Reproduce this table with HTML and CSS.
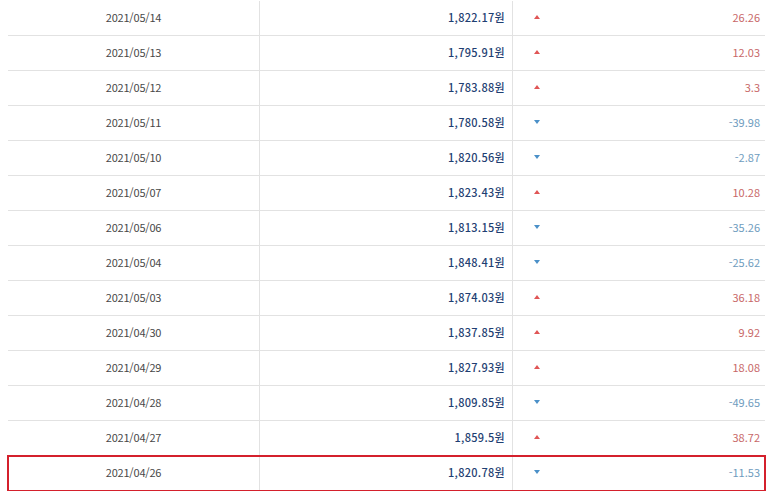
FILE: index.html
```html
<!DOCTYPE html>
<html lang="ko">
<head>
<meta charset="utf-8">
<link rel="stylesheet" href="styles.css">
</head>
<body>
<div class="table">
  <div class="row"><div class="date">2021/05/14</div><div class="price">1,822.17원</div><div class="chg up"><span class="arrow"></span><span class="val">26.26</span></div></div>
  <div class="row"><div class="date">2021/05/13</div><div class="price">1,795.91원</div><div class="chg up"><span class="arrow"></span><span class="val">12.03</span></div></div>
  <div class="row"><div class="date">2021/05/12</div><div class="price">1,783.88원</div><div class="chg up"><span class="arrow"></span><span class="val">3.3</span></div></div>
  <div class="row"><div class="date">2021/05/11</div><div class="price">1,780.58원</div><div class="chg down"><span class="arrow"></span><span class="val">-39.98</span></div></div>
  <div class="row"><div class="date">2021/05/10</div><div class="price">1,820.56원</div><div class="chg down"><span class="arrow"></span><span class="val">-2.87</span></div></div>
  <div class="row"><div class="date">2021/05/07</div><div class="price">1,823.43원</div><div class="chg up"><span class="arrow"></span><span class="val">10.28</span></div></div>
  <div class="row"><div class="date">2021/05/06</div><div class="price">1,813.15원</div><div class="chg down"><span class="arrow"></span><span class="val">-35.26</span></div></div>
  <div class="row"><div class="date">2021/05/04</div><div class="price">1,848.41원</div><div class="chg down"><span class="arrow"></span><span class="val">-25.62</span></div></div>
  <div class="row"><div class="date">2021/05/03</div><div class="price">1,874.03원</div><div class="chg up"><span class="arrow"></span><span class="val">36.18</span></div></div>
  <div class="row"><div class="date">2021/04/30</div><div class="price">1,837.85원</div><div class="chg up"><span class="arrow"></span><span class="val">9.92</span></div></div>
  <div class="row"><div class="date">2021/04/29</div><div class="price">1,827.93원</div><div class="chg up"><span class="arrow"></span><span class="val">18.08</span></div></div>
  <div class="row"><div class="date">2021/04/28</div><div class="price">1,809.85원</div><div class="chg down"><span class="arrow"></span><span class="val">-49.65</span></div></div>
  <div class="row"><div class="date">2021/04/27</div><div class="price">1,859.5원</div><div class="chg up"><span class="arrow"></span><span class="val">38.72</span></div></div>
  <div class="row highlight"><div class="date">2021/04/26</div><div class="price">1,820.78원</div><div class="chg down"><span class="arrow"></span><span class="val">-11.53</span></div></div>
</div>
</body>
</html>
```

FILE: styles.css
```css
html, body {
  margin: 0;
  padding: 0;
  background: #ffffff;
}
body {
  font-family: "Noto Sans CJK KR", "Noto Sans", sans-serif;
  font-size: 11px;
  width: 773px;
  height: 491px;
  overflow: hidden;
}
.table {
  padding: 1px 0 0 8px;
  width: 757px;
}
.row {
  display: grid;
  grid-template-columns: 252px 253px 252px;
  height: 34px;
  border-bottom: 1px solid #e2e2e2;
}
.row > div {
  display: flex;
  align-items: center;
  padding-bottom: 2px;
}
.date {
  justify-content: center;
  color: #484848;
  letter-spacing: -0.2px;
  border-right: 1px solid #e2e2e2;
}
.price {
  justify-content: flex-end;
  padding-right: 7px;
  color: #1f3f73;
  font-weight: 500;
  letter-spacing: 0.3px;
  border-right: 1px solid #e2e2e2;
}
.chg {
  justify-content: space-between;
  padding: 0 5px 0 21px;
}
.arrow {
  width: 0;
  height: 0;
  border-left: 3px solid transparent;
  border-right: 3px solid transparent;
}
.up .arrow {
  border-bottom: 4px solid #e05555;
}
.down .arrow {
  border-top: 4px solid #4a90c8;
}
.up .val {
  color: #c86868;
}
.down .val {
  color: #6e9cbe;
}
.highlight {
  outline: 2px solid #d4202c;
  outline-offset: -1px;
}
```
